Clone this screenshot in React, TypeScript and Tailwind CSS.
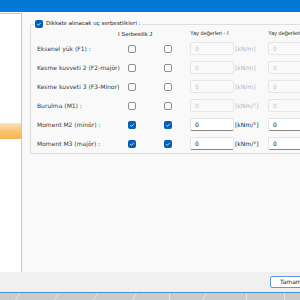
import React from 'react';

interface Row {
  label: string;
  unit: string;
  checked: boolean;
}

const rows: Row[] = [
  { label: 'Eksenel yük (F1) :', unit: '[kN/m]', checked: false },
  { label: 'Kesme kuvveti 2 (F2-majör)', unit: '[kN/m]', checked: false },
  { label: 'Kesme kuvveti 3 (F3-Minor)', unit: '[kN/m]', checked: false },
  { label: 'Burulma (M1) :', unit: '[kNm/°]', checked: false },
  { label: 'Moment M2 (minör) :', unit: '[kNm/°]', checked: true },
  { label: 'Moment M3 (majör) :', unit: '[kNm/°]', checked: true },
];

function Check({ on }: { on: boolean }) {
  if (on) {
    return (
      <div className="w-[8px] h-[8px] rounded-[2px] bg-[#005fb8] flex items-center justify-center shrink-0">
        <svg width="6" height="6" viewBox="0 0 6 6">
          <path d="M1.2 3.2 L2.4 4.3 L4.8 1.8" stroke="#fff" strokeWidth="0.8" fill="none" />
        </svg>
      </div>
    );
  }
  return <div className="w-[8px] h-[8px] rounded-[2px] border border-[#8f8f8f] bg-[#fbfbfb] shrink-0" />;
}

function ValueBox({ on }: { on: boolean }) {
  return on ? (
    <div className="w-[44px] h-[13px] rounded-[2px] bg-white border border-[#e3e3e3] border-b-[#868686] pl-[4px] flex items-center text-[#1a1a1a] shrink-0">
      0
    </div>
  ) : (
    <div className="w-[44px] h-[13px] rounded-[2px] bg-[#fafafa] border border-[#e6e6e6] pl-[4px] flex items-center text-[#c4c4c4] shrink-0">
      0
    </div>
  );
}

export default function App() {
  return (
    <div
      className="w-[300px] h-[300px] flex flex-col overflow-hidden text-[6px] leading-none"
      style={{ fontFamily: '"DejaVu Sans", Verdana, sans-serif' }}
    >
      {/* başlık çubuğu */}
      <div className="h-[12px] bg-[#0078d7] shrink-0" />

      <div className="flex-1 flex bg-[#f9f9f9] min-h-0">
        {/* sol liste */}
        <div className="w-[22px] mt-[1px] bg-white border-t border-r border-[#c8c8c8] shrink-0 flex flex-col">
          <div className="h-[109px]" />
          <div className="h-[16px] w-[21px] bg-gradient-to-b from-[#fde3b6] via-[#f9c572] to-[#f6b452]" />
        </div>

        {/* ana içerik */}
        <div className="flex-1 pl-[8px] pt-[8px] min-w-0">
          <fieldset className="border border-[#dedede] border-r-0 rounded-l-[2px] w-[300px]">
            <legend className="ml-[3px] px-[1px] flex items-center gap-[3px] h-[8px]">
              <Check on={true} />
              <span className="text-[5.5px] text-[#262626]">Dikkate alınacak uç serbestlikleri :</span>
            </legend>

            <div className="pl-[6px]">
              <div
                className="h-[10px] mt-[1px] flex items-center text-[#333]"
                style={{ fontFamily: '"Liberation Sans", Arial, sans-serif' }}
              >
                <span className="w-[81px] shrink-0" />
                <span className="w-[72px] shrink-0 text-[6px]">I Serbestlik J</span>
                <span className="w-[78px] shrink-0 text-[5.5px]">Yay değerleri - I</span>
                <span className="text-[5.5px] whitespace-nowrap">Yay değerleri - J</span>
              </div>

              {rows.map((r) => (
                <div key={r.label} className="h-[19px] flex items-center">
                  <span className="w-[91px] shrink-0 text-[#3a3a3a]">{r.label}</span>
                  <Check on={r.checked} />
                  <span className="w-[28px] shrink-0" />
                  <Check on={r.checked} />
                  <span className="w-[18px] shrink-0" />
                  <ValueBox on={r.checked} />
                  <span
                    className={
                      r.checked
                        ? 'w-[34px] shrink-0 pl-[1px] text-[#262626]'
                        : 'w-[34px] shrink-0 pl-[1px] text-[#b5b5b5]'
                    }
                  >
                    {r.unit}
                  </span>
                  <ValueBox on={r.checked} />
                </div>
              ))}
            </div>
          </fieldset>
        </div>
      </div>

      {/* alt çubuk */}
      <div className="h-[20px] bg-[#f0f0f0] shrink-0 flex items-center justify-end">
        <div className="w-[40px] h-[12px] -mr-[10px] bg-white border border-[#5a9bd8] rounded-[2px] pl-[9px] flex items-center text-[#1a1a1a]">
          Tamam
        </div>
      </div>

      {/* görev çubuğu */}
      <div className="h-[8px] shrink-0 border-t border-[#4a90d0] bg-[#cbcbcb] flex overflow-hidden">
        <div className="w-[18px] shrink-0 border-r border-[#e6e6e6] -skew-x-[30deg]" />
        <div className="w-[39px] shrink-0 border-r border-[#e6e6e6] -skew-x-[30deg]" />
        <div className="w-[39px] shrink-0 border-r border-[#e6e6e6] -skew-x-[30deg]" />
        <div className="w-[39px] shrink-0 border-r border-[#e6e6e6] -skew-x-[30deg]" />
        <div className="w-[35px] shrink-0 border-r border-[#e6e6e6]" />
        <div className="w-[35px] shrink-0 border-r border-[#e6e6e6] -skew-x-[30deg]" />
        <div className="w-[42px] shrink-0 border-r border-[#e6e6e6]" />
        <div className="w-[38px] shrink-0 border-r border-[#e6e6e6]" />
      </div>
    </div>
  );
}
